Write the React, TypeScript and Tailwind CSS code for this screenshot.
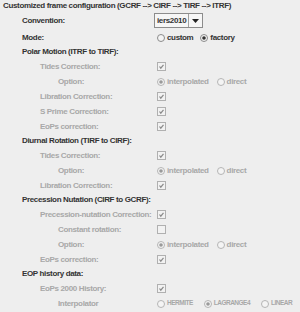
import React from "react";

// Swing-style (Metal) form, disabled rows in grey
const FONT = { fontFamily: '"Liberation Sans", Arial, sans-serif', letterSpacing: "-0.35px" };

type Kind = "check" | "uncheck" | "option" | "interp" | null;

type Row = { label: string; indent: number; head?: boolean; kind: Kind };

const ROWS: Row[] = [
  { label: "Polar Motion (ITRF to TIRF):", indent: 22, head: true, kind: null },
  { label: "Tides Correction:", indent: 40, kind: "check" },
  { label: "Option:", indent: 58, kind: "option" },
  { label: "Libration Correction:", indent: 40, kind: "check" },
  { label: "S Prime Correction:", indent: 40, kind: "check" },
  { label: "EoPs correction:", indent: 40, kind: "check" },
  { label: "Diurnal Rotation (TIRF to CIRF):", indent: 22, head: true, kind: null },
  { label: "Tides Correction:", indent: 40, kind: "check" },
  { label: "Option:", indent: 58, kind: "option" },
  { label: "Libration Correction:", indent: 40, kind: "check" },
  { label: "Precession Nutation (CIRF to GCRF):", indent: 22, head: true, kind: null },
  { label: "Precession-nutation Correction:", indent: 40, kind: "check" },
  { label: "Constant rotation:", indent: 58, kind: "uncheck" },
  { label: "Option:", indent: 58, kind: "option" },
  { label: "EoPs correction:", indent: 40, kind: "check" },
  { label: "EOP history data:", indent: 22, head: true, kind: null },
  { label: "EoPs 2000 History:", indent: 40, kind: "check" },
  { label: "Interpolator", indent: 58, kind: "interp" },
];

function Radio({ on, disabled }: { on?: boolean; disabled?: boolean }) {
  return (
    <svg width="8" height="8" viewBox="0 0 8 8" className="shrink-0">
      <circle cx="4" cy="4" r="3.5" fill="#f4f4f4" stroke={disabled ? "#b4b4b4" : "#8a8a8a"} strokeWidth="1" />
      {on && <circle cx="4" cy="4" r="1.8" fill={disabled ? "#9a9a9a" : "#333333"} />}
    </svg>
  );
}

function Check({ on }: { on: boolean }) {
  return (
    <svg width="9" height="9" viewBox="0 0 9 9" className="shrink-0">
      <rect x="0.5" y="0.5" width="8" height="8" fill="#f2f2f2" stroke="#b0b0b0" />
      {on && <path d="M2.5 4.5 L3.8 6.2 L6.5 2.8" fill="none" stroke="#8a8a8a" strokeWidth="1.2" />}
    </svg>
  );
}

function RadioItem({ label, on, disabled, small }: { label: string; on?: boolean; disabled?: boolean; small?: boolean }) {
  return (
    <div className="flex items-center gap-[2px]">
      <Radio on={on} disabled={disabled} />
      <span
        className={`${disabled ? "text-[#a8a8a8]" : "text-[#333333]"} ${small ? "text-[6.5px] tracking-[-0.5px]" : ""}`}
      >
        {label}
      </span>
    </div>
  );
}

function Control({ kind }: { kind: Kind }) {
  if (kind === "check") return <Check on />;
  if (kind === "uncheck") return <Check on={false} />;
  if (kind === "option")
    return (
      <div className="flex items-center gap-[8px]">
        <RadioItem label="interpolated" on disabled />
        <RadioItem label="direct" disabled />
      </div>
    );
  if (kind === "interp")
    return (
      <div className="flex items-center gap-[11px]">
        <RadioItem label="HERMITE" disabled small />
        <RadioItem label="LAGRANGE4" on disabled small />
        <RadioItem label="LINEAR" disabled small />
      </div>
    );
  return null;
}

export default function App() {
  return (
    <div
      className="w-[300px] h-[312px] bg-[#eeeeee] text-[8px] font-bold leading-none overflow-hidden"
      style={FONT}
    >
      <div className="h-[12px] pl-[3px] flex items-center text-[#333333]">
        Customized frame configuration (GCRF --&gt; CIRF --&gt; TIRF --&gt; ITRF)
      </div>

      {/* Convention combo */}
      <div className="flex items-center h-[15px] mt-[1px]">
        <div className="w-[154px] pl-[22px] text-[#333333]">Convention:</div>
        <div className="flex h-[15px] w-[49px] border border-[#8c8c8c] bg-[#f6f6f6]">
          <div className="flex-1 flex items-center pl-[2px] text-[#333333]">iers2010</div>
          <div className="w-[14px] border-l border-[#a0a0a0] flex items-center justify-center">
            <svg width="7" height="4" viewBox="0 0 7 4">
              <path d="M0 0 L7 0 L3.5 4 Z" fill="#222222" />
            </svg>
          </div>
        </div>
      </div>

      <div className="flex items-center h-[14px] mt-[3px]">
        <div className="w-[157px] pl-[22px] text-[#333333]">Mode:</div>
        <div className="flex items-center gap-[7px]">
          <RadioItem label="custom" />
          <RadioItem label="factory" on />
        </div>
      </div>

      {ROWS.map((r, i) => (
        <div key={i} className={`flex items-center ${r.head ? "h-[14px]" : "h-[15px]"}`}>
          <div
            className={`w-[157px] shrink-0 whitespace-nowrap ${r.head ? "text-[#333333]" : "text-[#a8a8a8]"}`}
            style={{ paddingLeft: r.indent }}
          >
            {r.label}
          </div>
          <Control kind={r.kind} />
        </div>
      ))}
    </div>
  );
}
